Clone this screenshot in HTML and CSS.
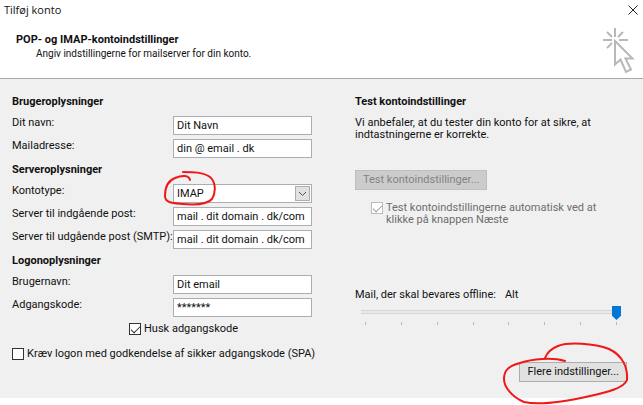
FILE: index.html
```html
<!DOCTYPE html>
<html lang="da">
<head>
    <meta charset="UTF-8">
    <meta name="viewport" content="width=device-width, initial-scale=1.0">
    <title>Tilføj konto</title>
    <link rel="stylesheet" href="styles.css">
</head>
<body>
    <!-- Title bar -->
    <div class="titlebar">
        <span class="window-title">Tilføj konto</span>
        <button type="button" class="close" aria-label="Luk">
            <svg width="10" height="10" viewBox="0 0 10 10"><path d="M.5.5l9 9M9.5.5l-9 9"/></svg>
        </button>
    </div>

    <!-- Header -->
    <header class="header">
        <div>
            <h1>POP- og IMAP-kontoindstillinger</h1>
            <p>Angiv indstillingerne for mailserver for din konto.</p>
        </div>
        <svg class="wizard-icon" width="32" height="46" viewBox="0 0 32 46">
            <path d="M12 9V0M9 12H0M16 12h9M9 9L4 4M15 9l5-5M9 15l-5 5"/>
            <path d="M12 13v23.500l5.500-5 5.500 12.500 5-2.500-5.500-11h7z"/>
        </svg>
    </header>

    <!-- Form -->
    <form class="panel">
        <div class="column">
            <h2>Brugeroplysninger</h2>
            <div class="row">
                <label for="name">Dit navn:</label>
                <input type="text" id="name" value="Dit Navn">
            </div>
            <div class="row">
                <label for="email">Mailadresse:</label>
                <input type="text" id="email" value="din @ email . dk">
            </div>

            <h2>Serveroplysninger</h2>
            <div class="row">
                <label for="type">Kontotype:</label>
                <div class="select">
                    <select id="type">
                        <option>IMAP</option>
                    </select>
                    <span class="arrow"><svg width="9" height="6" viewBox="0 0 9 6"><path d="M1 1l3.500 3.500L8 1"/></svg></span>
                    <svg class="mark mark-type" width="54" height="36" viewBox="0 0 54 36">
                        <path d="M27 10C26 5 19 5 12 8C4 11 2 18 2 26C2 33 10 33 20 34C32 35 44 35 49 29C53 23 53 12 47 7C40 2 30 2 20 2"/>
                    </svg>
                </div>
            </div>
            <div class="row">
                <label for="incoming">Server til indgående post:</label>
                <input type="text" id="incoming" value="mail . dit domain . dk/com">
            </div>
            <div class="row">
                <label for="outgoing">Server til udgående post (SMTP):</label>
                <input type="text" id="outgoing" value="mail . dit domain . dk/com">
            </div>

            <h2>Logonoplysninger</h2>
            <div class="row">
                <label for="user">Brugernavn:</label>
                <input type="text" id="user" value="Dit email">
            </div>
            <div class="row">
                <label for="password">Adgangskode:</label>
                <input type="text" id="password" value="*******">
            </div>
            <label class="check remember"><input type="checkbox" checked>Husk adgangskode</label>
            <label class="check logon"><input type="checkbox">Kræv logon med godkendelse af sikker adgangskode (SPA)</label>
        </div>

        <div class="column">
            <h2>Test kontoindstillinger</h2>
            <p class="intro">Vi anbefaler, at du tester din konto for at sikre, at indtastningerne er korrekte.</p>
            <button type="button" class="test" disabled>Test kontoindstillinger...</button>
            <label class="check auto-test"><input type="checkbox" checked disabled>Test kontoindstillingerne automatisk ved at klikke på knappen Næste</label>

            <div class="offline">
                <label for="offline">Mail, der skal bevares offline:</label>
                <output for="offline">Alt</output>
            </div>
            <input type="range" id="offline" min="0" max="7" value="7">
            <div class="ticks"><i></i><i></i><i></i><i></i><i></i><i></i><i></i><i></i></div>

            <div class="more">
                <button type="button">Flere indstillinger...</button>
                <svg class="mark mark-more" width="128" height="64" viewBox="0 0 128 64">
                    <path d="M63 20C50 16 30 18 18 22C6 25 2 30 2 38C2 46 10 56 22 61C40 65 66 60 88 55C106 51 122 47 125 39C126 26 120 14 107 8C92 2 66 1 56 5C48 8 45 12 43 17"/>
                </svg>
            </div>
        </div>
    </form>
</body>
</html>
```
FILE: styles.css
```css
:root {
    --color-panel: #f0f0f0;
    --color-border: #abadb3;
    --color-text: #111;
    --color-disabled: #838383;
    --color-accent: #0078d7;
    --color-mark: #f11717;
}

* {
    box-sizing: border-box;
    margin: 0;
    padding: 0;
}

body {
    min-height: 100vh;
    padding-bottom: 7px;
    background: white;
    color: var(--color-text);
    font: 11px/12px Roboto, "Open Sans", sans-serif;
}

svg {
    display: block;
    fill: none;
}

/* Title bar */
.titlebar {
    display: flex;
    justify-content: space-between;
    align-items: center;
    height: 20px;
    padding: 0 5px 0 4px;
}

.window-title {
    font-family: "Open Sans", sans-serif;
}

.close {
    border: none;
    background: none;
}

.close svg {
    stroke: #222;
}

/* Header */
.header {
    display: flex;
    justify-content: space-between;
    height: 59px;
    padding: 8px 8px 0 16px;
    border-bottom: 1px solid #a8a8a8;
}

.header h1 {
    margin-top: 5px;
    font-size: 11px;
    line-height: 14px;
}

.header p {
    padding-left: 20px;
    font-size: 10px;
    line-height: 14px;
}

.wizard-icon {
    stroke: #b8b8b8;
    stroke-width: 2;
}

/* Form panel */
.panel {
    display: grid;
    grid-template-columns: minmax(0, 300fr) minmax(0, 272fr);
    gap: 43px;
    padding: 15px 16px 16px 12px;
    background: var(--color-panel);
}

h2 {
    margin-bottom: 6px;
    font-size: 11px;
    line-height: 16px;
}

.row {
    display: grid;
    grid-template-columns: 161px 1fr;
    margin-bottom: 4px;
}

.row label {
    line-height: 14px;
    white-space: nowrap;
}

input,
select,
button {
    color: inherit;
    font: inherit;
}

input[type="text"],
select {
    width: 100%;
    height: 19px;
    padding: 0 3px;
    border: 1px solid var(--color-border);
    border-radius: 0;
    background: white;
    appearance: none;
}

.select {
    position: relative;
}

.arrow {
    position: absolute;
    top: 2px;
    right: 2px;
    display: grid;
    place-items: center;
    width: 15px;
    height: 15px;
    border: 1px solid #adadad;
    background: #e1e1e1;
    pointer-events: none;
}

.arrow svg {
    stroke: #555;
}

/* Check boxes */
.check {
    display: flex;
    gap: 3px;
}

.check input {
    flex: none;
    width: 12px;
    height: 12px;
    border: 1px solid #333;
    background: white;
    appearance: none;
}

.check input:checked::before {
    content: "";
    display: block;
    width: 8px;
    height: 4px;
    margin: 2px 1px;
    border: solid #333;
    border-width: 0 0 1px 1px;
    transform: rotate(-45deg);
}

.check input:disabled {
    border-color: #bcbcbc;
}

.check input:checked:disabled::before {
    border-color: #a0a0a0;
}

.remember {
    margin: 6px 0 13px;
    padding-left: 117px;
}

.logon {
    white-space: nowrap;
}

/* Right column */
.intro {
    padding: 1px 0;
    margin-bottom: 28px;
}

button {
    white-space: nowrap;
}

.test,
.more button {
    height: 20px;
    padding: 0 7px;
    border: 1px solid #adadad;
    background: #e1e1e1;
}

.test:disabled {
    border-color: #bfbfbf;
    background: #ccc;
    color: var(--color-disabled);
}

.auto-test {
    margin: 12px 0 63px;
    padding: 0 16px;
    color: #6d6d6d;
}

.offline {
    display: flex;
    gap: 9px;
    margin-bottom: 5px;
}

/* Slider */
input[type="range"] {
    display: block;
    width: calc(100% - 12px);
    height: 14px;
    margin: 0 6px;
    background: linear-gradient(#d6d6d6 1px, #e7eaea 1px 3px, #d6d6d6 3px) 0 4px / 100% 4px no-repeat;
    appearance: none;
}

input[type="range"]::-webkit-slider-thumb {
    width: 9px;
    height: 14px;
    background: var(--color-accent);
    clip-path: polygon(0 0, 100% 0, 100% 70%, 50% 100%, 0 70%);
    appearance: none;
}

.ticks {
    display: flex;
    justify-content: space-between;
    margin: 2px 10px 0;
}

.ticks i {
    width: 1px;
    height: 3px;
    background: #bbb;
}

.more {
    position: relative;
    display: flex;
    justify-content: flex-end;
    margin-top: 37px;
}

/* Red pen circles */
.mark {
    position: absolute;
    stroke: var(--color-mark);
    stroke-width: 2;
    stroke-linecap: round;
    pointer-events: none;
}

.mark-type {
    top: -14px;
    left: -10px;
}

.mark-more {
    top: -21px;
    right: -3px;
}
```
